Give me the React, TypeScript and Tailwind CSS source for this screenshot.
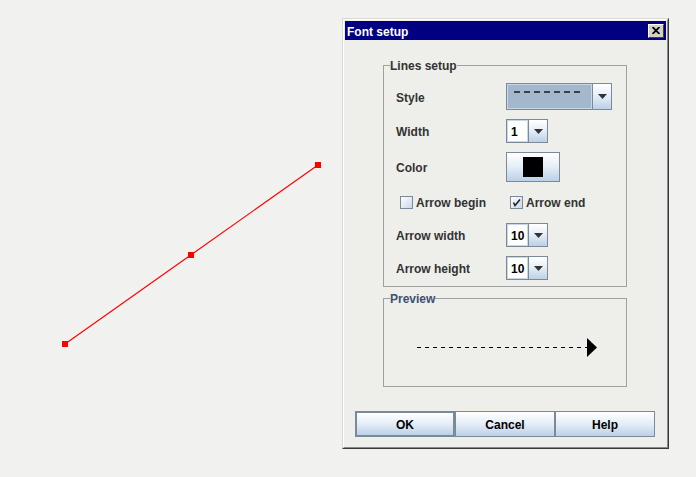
import React, { useState } from 'react';

const labelCls = "text-[12px] font-bold text-[#333333] leading-[14px] pt-[2px]";
const btnGradient = "bg-gradient-to-b from-white via-[#e4edf7] to-[#bcd0e7]";

const ComboArrow: React.FC = () => (
  <div className={`w-[19px] h-full flex items-center justify-center border-l border-[#7a8a99] ${btnGradient}`}>
    <svg width="9" height="5" viewBox="0 0 9 5">
      <polygon points="0,0 9,0 4.5,5" fill="#333333" />
    </svg>
  </div>
);

const SmallCombo: React.FC<{ value: string }> = ({ value }) => (
  <div className="w-[42px] h-[24px] flex border border-[#7a8a99] bg-white">
    <div className="flex-1 flex items-center pl-[3px] pt-[2px] border border-[#c8d6e6] text-[12px] font-bold text-black">
      {value}
    </div>
    <ComboArrow />
  </div>
);

const CheckBox: React.FC<{ checked: boolean; label: string; onToggle: () => void }> = ({ checked, label, onToggle }) => (
  <button type="button" onClick={onToggle} className="flex items-center gap-[3px]">
    <span className="w-[13px] h-[13px] border border-[#7a8a99] bg-gradient-to-br from-white to-[#c9d8ea] flex items-center justify-center">
      {checked && (
        <svg width="9" height="9" viewBox="0 0 9 9">
          <path d="M1.5 4.5 L3 7.5 L8 1.5" stroke="#222" strokeWidth="1.6" fill="none" />
        </svg>
      )}
    </span>
    <span className={labelCls}>{label}</span>
  </button>
);

const App: React.FC = () => {
  const [arrowBegin, setArrowBegin] = useState(false);
  const [arrowEnd, setArrowEnd] = useState(true);

  return (
    <div className="relative w-[696px] h-[477px] overflow-hidden bg-[#f1f2f0] font-['Liberation_Sans',Arial,sans-serif]">
      {/* canvas with the selected line */}
      <svg className="absolute inset-0" width="696" height="477" viewBox="0 0 696 477">
        <line x1="65" y1="344" x2="318" y2="165" stroke="#ff0000" strokeWidth="1.2" />
        <rect x="62" y="341" width="6" height="6" fill="#ff0000" />
        <rect x="188" y="252" width="6" height="6" fill="#ff0000" />
        <rect x="315" y="162" width="6" height="6" fill="#ff0000" />
      </svg>

      {/* dialog window */}
      <div className="absolute left-[342px] top-[18px] w-[327px] h-[431px] border border-t-[#d8d8d4] border-l-[#d8d8d4] border-r-[#3a3a3a] border-b-[#3a3a3a]">
        <div className="w-full h-full flex flex-col border border-t-white border-l-white border-r-[#8a8a8a] border-b-[#8a8a8a] p-px bg-[#eeeeea]">
          {/* title bar */}
          <div className="h-[19px] bg-[#000080] flex items-center justify-between pl-[2px] pr-[2px]">
            <span className="text-[12px] font-bold text-white leading-[14px] pt-[2px]">Font setup</span>
            <button type="button" className="w-[16px] h-[14px] bg-[#d4d0c8] border border-t-white border-l-white border-r-[#404040] border-b-[#404040] flex items-center justify-center">
              <svg width="8" height="7" viewBox="0 0 8 7">
                <path d="M0.5 0 L7.5 7 M7.5 0 L0.5 7" stroke="#000" strokeWidth="1.8" />
              </svg>
            </button>
          </div>

          {/* content */}
          <div className="flex-1 flex flex-col">
            <fieldset className="ml-[38px] mt-[17px] w-[244px] h-[230px] border border-[#a0a0a0]">
              <legend className="ml-[6px] pt-[2px] text-[12px] font-bold text-[#333333] leading-[14px]">Lines setup</legend>
              <div className="flex flex-col pl-[12px] pt-[10px]">
                <div className="flex items-center h-[27px]">
                  <span className={`${labelCls} w-[110px]`}>Style</span>
                  <div className="w-[106px] h-[27px] flex border border-[#7a8a99]">
                    <div className="flex-1 bg-[#a3b8cc] border border-[#c8d6e6] pt-[6px] pl-[6px]">
                      <svg width="66" height="2" viewBox="0 0 66 2">
                        <line x1="0" y1="1" x2="66" y2="1" stroke="#1a1a1a" strokeWidth="1.3" strokeDasharray="6 4" />
                      </svg>
                    </div>
                    <ComboArrow />
                  </div>
                </div>

                <div className="flex items-center h-[24px] mt-[9px]">
                  <span className={`${labelCls} w-[110px]`}>Width</span>
                  <SmallCombo value="1" />
                </div>

                <div className="flex items-center h-[30px] mt-[9px]">
                  <span className={`${labelCls} w-[110px]`}>Color</span>
                  <button type="button" className={`w-[54px] h-[30px] border border-[#7a8a99] flex items-center justify-center ${btnGradient}`}>
                    <span className="w-[20px] h-[20px] bg-black" />
                  </button>
                </div>

                <div className="flex items-center h-[20px] mt-[10px] pl-[4px]">
                  <div className="w-[110px]">
                    <CheckBox checked={arrowBegin} label="Arrow begin" onToggle={() => setArrowBegin(!arrowBegin)} />
                  </div>
                  <CheckBox checked={arrowEnd} label="Arrow end" onToggle={() => setArrowEnd(!arrowEnd)} />
                </div>

                <div className="flex items-center h-[24px] mt-[11px]">
                  <span className={`${labelCls} w-[110px]`}>Arrow width</span>
                  <SmallCombo value="10" />
                </div>

                <div className="flex items-center h-[24px] mt-[9px]">
                  <span className={`${labelCls} w-[110px]`}>Arrow height</span>
                  <SmallCombo value="10" />
                </div>
              </div>
            </fieldset>

            <fieldset className="ml-[38px] mt-[3px] w-[244px] h-[97px] border border-[#a0a0a0]">
              <legend className="ml-[6px] pt-[2px] text-[12px] font-bold text-[#3d5170] leading-[14px]">Preview</legend>
              <svg width="242" height="80" viewBox="0 0 242 80">
                <line x1="33" y1="41.5" x2="203" y2="41.5" stroke="#000" strokeWidth="1" strokeDasharray="4 4" />
                <polygon points="203,32 213,41.5 203,51" fill="#000" />
              </svg>
            </fieldset>

            <div className="ml-[10px] mt-[24px] flex">
              <button type="button" className={`w-[100px] h-[26px] pt-[2px] border-2 border-[#7a8a99] text-[12px] font-bold text-black ${btnGradient}`}>OK</button>
              <button type="button" className={`w-[100px] h-[26px] pt-[2px] border border-[#7a8a99] text-[12px] font-bold text-black ${btnGradient}`}>Cancel</button>
              <button type="button" className={`w-[100px] h-[26px] pt-[2px] border border-[#7a8a99] text-[12px] font-bold text-black ${btnGradient}`}>Help</button>
            </div>
          </div>
        </div>
      </div>
    </div>
  );
};

export default App;
